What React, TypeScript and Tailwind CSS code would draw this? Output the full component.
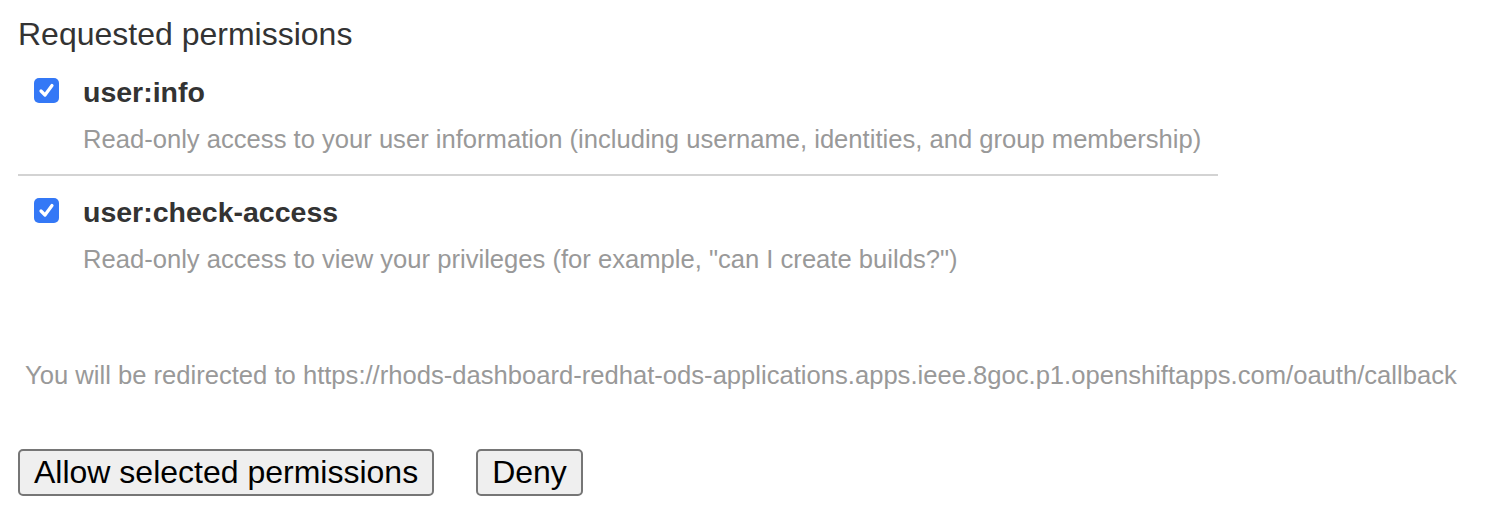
import React from "react";

function Check() {
  return (
    <div className="w-[25px] h-[25px] rounded-[5px] bg-[#3478f6] flex items-center justify-center shrink-0">
      <svg width="17" height="17" viewBox="0 0 17 17" fill="none">
        <path d="M3 9 L7 13 L14 3.5" stroke="white" strokeWidth="3.2" strokeLinecap="round" strokeLinejoin="round" />
      </svg>
    </div>
  );
}

function Perm({ name, desc }: { name: string; desc: string }) {
  return (
    <div className="pl-[16px]">
      <div className="flex items-start">
        <Check />
        <div className="ml-[24px] text-[28.5px] leading-none font-bold text-[#333]">{name}</div>
      </div>
      <div className="pl-[49px] mt-[20px] text-[25.6px] leading-none text-[#999]">{desc}</div>
    </div>
  );
}

export default function App() {
  return (
    <div className="w-[1510px] h-[519px] bg-white pl-[18px] pt-[18px]" style={{ fontFamily: '"Liberation Sans", Arial, sans-serif' }}>
      <div className="text-[32px] leading-none text-[#333]">Requested permissions</div>
      <div className="mt-[28px]">
        <Perm name="user:info" desc="Read-only access to your user information (including username, identities, and group membership)" />
      </div>
      <div className="w-[1200px] h-[2px] bg-[#d3d3d3] mt-[22px]" />
      <div className="mt-[22px]">
        <Perm name="user:check-access" desc={'Read-only access to view your privileges (for example, "can I create builds?")'} />
      </div>
      <div className="mt-[91px] pl-[7px] text-[25.6px] leading-none text-[#999]">
        You will be redirected to https://rhods-dashboard-redhat-ods-applications.apps.ieee.8goc.p1.openshiftapps.com/oauth/callback
      </div>
      <div className="mt-[60px] flex gap-[42px]">
        <button className="h-[47px] px-[14px] border-2 border-[#767676] rounded-[5px] bg-[#efefef] text-[32px] leading-none text-black">Allow selected permissions</button>
        <button className="h-[47px] px-[14px] border-2 border-[#767676] rounded-[5px] bg-[#efefef] text-[32px] leading-none text-black">Deny</button>
      </div>
    </div>
  );
}
